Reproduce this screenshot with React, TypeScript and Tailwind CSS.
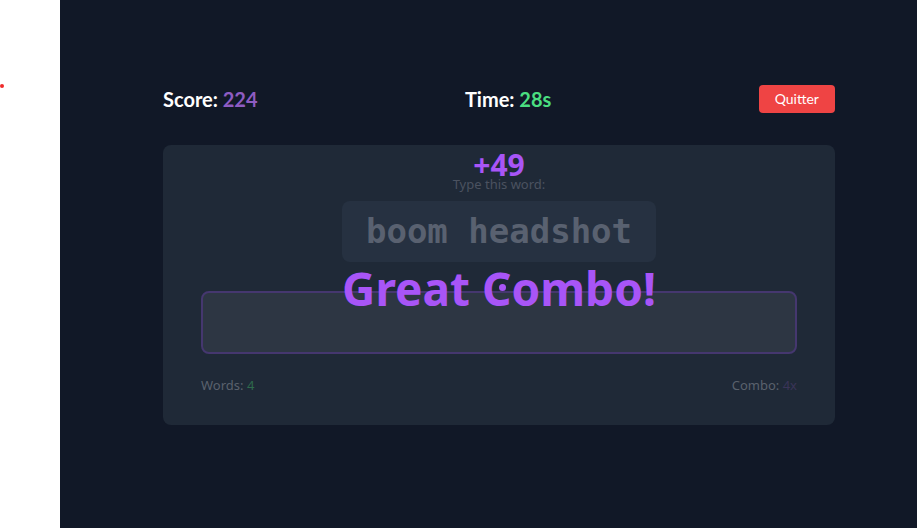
import React from "react";

const Header = () => {
  return (
    <div className="flex items-center justify-between w-full font-['Lato',sans-serif]">
      <h2 className="text-[20px] font-bold text-white">
        Score: <span className="text-[#8e5cc2]">224</span>
      </h2>
      <h2 className="text-[20px] font-bold text-white">
        Time: <span className="text-[#4ade80]">28s</span>
      </h2>
      <button className="h-7 px-4 rounded bg-[#ef4444] text-white text-sm">Quitter</button>
    </div>
  );
};

const GameCard = () => {
  return (
    <div className="relative mt-[31px] rounded-lg bg-[#1f2937] px-[38px] pt-[30px] pb-[31px] font-['Noto_Sans',sans-serif]">
      <div className="flex flex-col items-center">
        <p className="text-[13px] leading-[18px] text-[#4b5260]">Type this word:</p>
        <div className="mt-2 rounded-lg bg-[#263141] px-6 py-3">
          <span className="font-['DejaVu_Sans_Mono',monospace] text-[34px] leading-[37px] font-bold text-[#596170]">
            boom headshot
          </span>
        </div>
      </div>
      <div className="mt-[29px] h-[63px] w-full rounded-lg border-2 border-[#45376f] bg-[#2d3643]" />
      <div className="mt-[22px] flex justify-between text-[13px] leading-[18px] text-[#5a616d]">
        <span>
          Words: <span className="text-[#2e6a4c]">4</span>
        </span>
        <span>
          Combo: <span className="text-[#3a3458]">4x</span>
        </span>
      </div>

      <div className="absolute left-0 right-0 top-[2px] text-center text-[30px] leading-[36px] font-bold text-[#a855f7]">
        +49
      </div>
      <div className="absolute left-0 right-0 top-[116px] text-center text-[46px] leading-[54px] font-bold text-[#a855f7]">
        Great Combo!
      </div>
      <div className="absolute left-[336px] top-[139px] h-[7px] w-[7px] rounded-full bg-[#a855f7]" />
    </div>
  );
};

export default function App() {
  return (
    <div className="flex h-[528px] w-full">
      <div className="relative w-[60px] bg-white">
        <div className="absolute left-0 top-[84px] h-[4px] w-[4px] rounded-full bg-[#ef2b2b]" />
      </div>
      <div className="flex flex-1 justify-center bg-[#111827] pt-[84px]">
        <div className="w-[672px] ml-[21px]">
          <Header />
          <GameCard />
        </div>
      </div>
    </div>
  );
}
